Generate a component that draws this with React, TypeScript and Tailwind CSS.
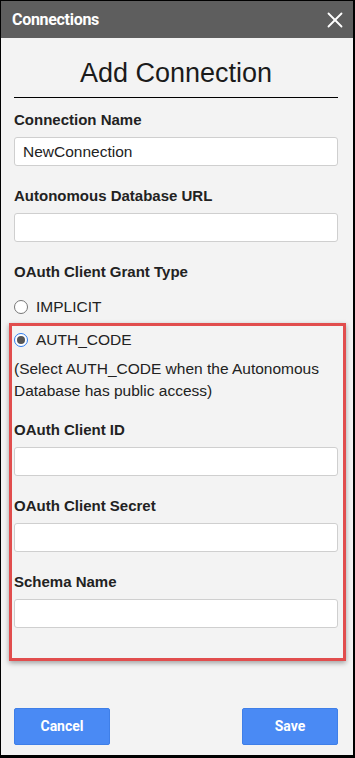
import { X } from 'lucide-react';

const labelCls = 'mt-[21px] text-[15px] leading-[17px] font-bold text-[#222]';
const inputCls =
  'mt-[9px] block h-[29px] w-full rounded-[3px] border border-[#cfcfcf] bg-white px-[8px] text-[15.5px] text-[#222] outline-none';

function Field({ label, value = '', first = false }: { label: string; value?: string; first?: boolean }) {
  return (
    <div>
      <div className={first ? 'text-[15px] leading-[17px] font-bold text-[#222]' : labelCls}>{label}</div>
      <input className={inputCls} defaultValue={value} />
    </div>
  );
}

function Radio({ checked, label }: { checked?: boolean; label: string }) {
  return (
    <div className="flex h-[20px] items-center gap-[8px]">
      {checked ? (
        <span className="flex h-[14px] w-[14px] items-center justify-center rounded-full border-[1.5px] border-[#2f7cf0] bg-white">
          <span className="h-[8px] w-[8px] rounded-full bg-[#555]" />
        </span>
      ) : (
        <span className="h-[14px] w-[14px] rounded-full border border-[#767676] bg-white" />
      )}
      <span className="text-[15.5px] text-[#222]">{label}</span>
    </div>
  );
}

export default function App() {
  return (
    <div
      className="flex h-[758px] w-[355px] flex-col border-t border-l border-r-2 border-b-[3px] border-black bg-[#f3f3f3]"
      style={{ fontFamily: '"Liberation Sans", Arial, sans-serif' }}
    >
      {/* Barra superior */}
      <div className="flex h-[37px] items-center justify-between bg-[#5e5e5e] pl-[11px] pr-[5px]">
        <span className="font-['Roboto'] text-[16px] font-bold tracking-[-0.3px] text-white">Connections</span>
        <X className="h-[26px] w-[26px] text-white" strokeWidth={1.7} />
      </div>

      <div className="pl-[13px] pr-[15px]">
        <h1 className="mt-[19px] text-center text-[27px] leading-[32px] font-normal text-[#1b1b1b]">Add Connection</h1>
        <div className="mt-[8px] h-px bg-black" />

        <div className="mt-[13px]">
          <Field label="Connection Name" value="NewConnection" first />
          <Field label="Autonomous Database URL" />
          <div className={labelCls}>OAuth Client Grant Type</div>

          <div className="mt-[17px]">
            <Radio label="IMPLICIT" />
          </div>

          {/* Recuadro rojo */}
          <div className="mt-[6px] -ml-[5px] -mr-[8px] border-[3px] border-[#e14d4d] pt-[4px] pr-[5px] pb-[30px] pl-[2px] shadow-[0_2px_5px_rgba(0,0,0,0.35)]">
            <Radio checked label="AUTH_CODE" />
            <p className="mt-[8px] text-[15.5px] leading-[22px] text-[#222]">
              (Select AUTH_CODE when the Autonomous Database has public access)
            </p>
            <div className="mt-[19px] text-[15px] leading-[17px] font-bold text-[#222]">OAuth Client ID</div>
            <input className={inputCls} />
            <Field label="OAuth Client Secret" />
            <Field label="Schema Name" />
          </div>
        </div>

        <div className="mt-[47px] flex justify-between">
          <button className="h-[37px] w-[96px] rounded-[2px] border border-[#3f7fe8] bg-[#4a8af4] font-['Roboto'] text-[14px] font-bold text-white">
            Cancel
          </button>
          <button className="h-[37px] w-[96px] rounded-[2px] border border-[#3f7fe8] bg-[#4a8af4] font-['Roboto'] text-[14px] font-bold text-white">
            Save
          </button>
        </div>
      </div>
    </div>
  );
}
